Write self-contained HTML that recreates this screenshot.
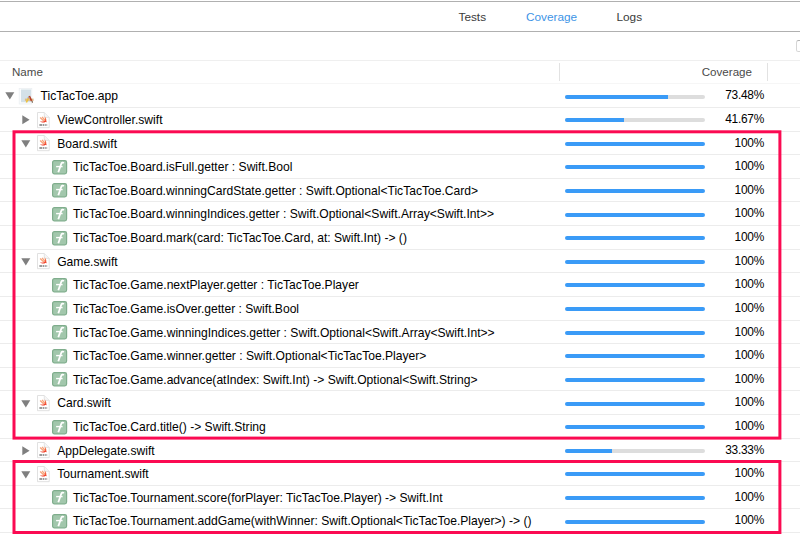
<!DOCTYPE html>
<html><head><meta charset="utf-8"><style>
html,body{margin:0;padding:0;background:#fff;}
body{width:800px;height:555px;position:relative;overflow:hidden;font-family:"Liberation Sans",sans-serif;}
.ln{position:absolute;left:0;width:800px;height:1px;}
.sep{position:absolute;left:0;width:800px;height:1px;background:#ececec;}
.ic{position:absolute;display:block;}
.nm{position:absolute;font-size:12.1px;line-height:20px;color:#000;white-space:pre;}
.pct{position:absolute;right:36px;letter-spacing:-0.25px;font-size:11.9px;line-height:20px;color:#000;white-space:pre;}
.bar{position:absolute;left:565px;width:140.4px;height:4px;border-radius:2px;background:#dddddd;overflow:hidden;}
.fill{height:100%;background:#3a9bf7;}
.tab{position:absolute;top:7px;font-size:11.8px;line-height:20px;color:#3a3a3a;white-space:pre;}
.hd{position:absolute;top:62px;font-size:11.6px;line-height:20px;color:#4a4a4a;white-space:pre;}
.vs{position:absolute;width:1px;background:#e2e2e2;top:63px;height:18px;}
.box{position:absolute;left:12.5px;width:762.4px;border:3px solid #fb0a52;}
</style></head><body>
<div class="ln" style="top:1px;background:#b0b0b0"></div>
<div class="tab" style="left:458.5px">Tests</div>
<div class="tab" style="left:526px;color:#3d94e6">Coverage</div>
<div class="tab" style="left:616.5px">Logs</div>
<div class="ln" style="top:31px;background:#b0b0b0"></div>
<div style="position:absolute;left:796px;top:40px;width:10px;height:10px;border:1px solid #d6d6d6;border-top-color:#b5b5b5;border-radius:2.5px;"></div>
<div class="ln" style="top:60px;background:#efefef"></div>
<div class="hd" style="left:12px">Name</div>
<div class="hd" style="right:48px">Coverage</div>
<div class="vs" style="left:559px"></div>
<div class="vs" style="left:767px"></div>
<div class="sep" style="top:83.39px;background:#f6f6f6"></div>
<div class="sep" style="top:107.00px"></div>
<div class="sep" style="top:130.61px"></div>
<div class="sep" style="top:154.22px"></div>
<div class="sep" style="top:177.83px"></div>
<div class="sep" style="top:201.44px"></div>
<div class="sep" style="top:225.06px"></div>
<div class="sep" style="top:248.67px"></div>
<div class="sep" style="top:272.28px"></div>
<div class="sep" style="top:295.89px"></div>
<div class="sep" style="top:319.50px"></div>
<div class="sep" style="top:343.11px"></div>
<div class="sep" style="top:366.72px"></div>
<div class="sep" style="top:390.33px"></div>
<div class="sep" style="top:413.94px"></div>
<div class="sep" style="top:437.56px"></div>
<div class="sep" style="top:461.17px"></div>
<div class="sep" style="top:484.78px"></div>
<div class="sep" style="top:508.39px"></div>
<div class="sep" style="top:532.00px"></div>
<svg class="ic" style="left:5px;top:92.39px" width="10" height="8" viewBox="0 0 10 8"><path d="M0.3 0.3H9.3L4.8 7.6Z" fill="#7f7f7f"/></svg>
<svg class="ic" style="left:18px;top:87.89px" width="17" height="17" viewBox="0 0 17 17">
<rect x="1.2" y="0.5" width="12.6" height="15.5" fill="#fbfcfd" stroke="#eceff2" stroke-width="0.8"/>
<rect x="3" y="1.5" width="10" height="12.7" fill="#d4e1e8"/>
<rect x="6.9" y="10.6" width="8.7" height="2.3" fill="#dcbb8c"/>
<path d="M11.3 8 L13.6 12.9" stroke="#b5402a" stroke-width="1.7"/>
<path d="M10.9 8.8 L8.4 14.5" stroke="#eec235" stroke-width="1.5"/>
<path d="M10.9 8.8 L10.2 10.3" stroke="#a894c8" stroke-width="1.2"/>
<path d="M13.8 13.2 L14.6 14.6" stroke="#5a3a20" stroke-width="1.1"/>
</svg>
<div class="nm" style="left:40.5px;top:86.39px">TicTacToe.app</div>
<div class="bar" style="top:94.59px"><div class="fill" style="width:103.17px"></div></div>
<div class="pct" style="top:85.39px">73.48%</div>
<svg class="ic" style="left:22px;top:115.20100000000001px" width="8" height="10" viewBox="0 0 8 10"><path d="M0.3 0.2V9.2L7.6 4.7Z" fill="#7f7f7f"/></svg>
<svg class="ic" style="left:36.7px;top:111.601px" width="13" height="17" viewBox="0 0 13 17">
<defs><linearGradient id="sg" x1="0" y1="0" x2="0" y2="1"><stop offset="0" stop-color="#f78c55"/><stop offset="1" stop-color="#f03a28"/></linearGradient></defs>
<path d="M0.5 0.5H7.3L12.2 5.4V15.7H0.5Z" fill="#fff" stroke="#dedede" stroke-width="0.9"/>
<path d="M7.3 0.5V5.4H12.2" fill="#f6f6f6" stroke="#dedede" stroke-width="0.8"/>
<path d="M3.1 5.6L6.8 8.9M5.1 4.9L7.6 7.9" stroke="#f7a47a" stroke-width="1.3"/>
<path d="M7.6 4.2C9 5.6 9.6 7.6 9.3 9.1C9.6 9.5 9.7 9.9 9.6 10.4C9.2 10 8.7 9.9 8.3 10.1C7 10.9 4.8 10.9 2.9 9.2C4.6 9.9 6.4 9.7 7.4 8.7C8 7.3 8.1 5.8 7.6 4.2Z" fill="url(#sg)"/>
<path d="M2.4 12.9H10.2" stroke="#7a7a7a" stroke-width="1.5" stroke-dasharray="3 0.6 1.4 0.6 0.8 0.6 1 0"/>
</svg>
<div class="nm" style="left:57.2px;top:110.00px">ViewController.swift</div>
<div class="bar" style="top:118.20px"><div class="fill" style="width:58.50px"></div></div>
<div class="pct" style="top:109.00px">41.67%</div>
<svg class="ic" style="left:21.4px;top:140.012px" width="10" height="8" viewBox="0 0 10 8"><path d="M0.3 0.3H9.3L4.8 7.6Z" fill="#7f7f7f"/></svg>
<svg class="ic" style="left:36.7px;top:135.212px" width="13" height="17" viewBox="0 0 13 17">
<defs><linearGradient id="sg" x1="0" y1="0" x2="0" y2="1"><stop offset="0" stop-color="#f78c55"/><stop offset="1" stop-color="#f03a28"/></linearGradient></defs>
<path d="M0.5 0.5H7.3L12.2 5.4V15.7H0.5Z" fill="#fff" stroke="#dedede" stroke-width="0.9"/>
<path d="M7.3 0.5V5.4H12.2" fill="#f6f6f6" stroke="#dedede" stroke-width="0.8"/>
<path d="M3.1 5.6L6.8 8.9M5.1 4.9L7.6 7.9" stroke="#f7a47a" stroke-width="1.3"/>
<path d="M7.6 4.2C9 5.6 9.6 7.6 9.3 9.1C9.6 9.5 9.7 9.9 9.6 10.4C9.2 10 8.7 9.9 8.3 10.1C7 10.9 4.8 10.9 2.9 9.2C4.6 9.9 6.4 9.7 7.4 8.7C8 7.3 8.1 5.8 7.6 4.2Z" fill="url(#sg)"/>
<path d="M2.4 12.9H10.2" stroke="#7a7a7a" stroke-width="1.5" stroke-dasharray="3 0.6 1.4 0.6 0.8 0.6 1 0"/>
</svg>
<div class="nm" style="left:57.2px;top:133.61px">Board.swift</div>
<div class="bar" style="top:141.81px"><div class="fill" style="width:140.40px"></div></div>
<div class="pct" style="top:132.61px">100%</div>
<svg class="ic" style="left:51.8px;top:159.823px" width="16" height="15" viewBox="0 0 16 15">
<rect x="0.6" y="0.6" width="14" height="13.2" rx="1.8" fill="#a2c7ac" stroke="#7fad8c" stroke-width="1.2"/>
<path d="M11.9 2.9C11 2.3 9.8 2.5 9.3 3.8L6.3 12.3" fill="none" stroke="#fff" stroke-width="1.8"/>
<path d="M4.1 6.6H10.6" stroke="#fff" stroke-width="1.4"/>
</svg>
<div class="nm" style="left:73px;top:157.22px">TicTacToe.Board.isFull.getter : Swift.Bool</div>
<div class="bar" style="top:165.42px"><div class="fill" style="width:140.40px"></div></div>
<div class="pct" style="top:156.22px">100%</div>
<svg class="ic" style="left:51.8px;top:183.434px" width="16" height="15" viewBox="0 0 16 15">
<rect x="0.6" y="0.6" width="14" height="13.2" rx="1.8" fill="#a2c7ac" stroke="#7fad8c" stroke-width="1.2"/>
<path d="M11.9 2.9C11 2.3 9.8 2.5 9.3 3.8L6.3 12.3" fill="none" stroke="#fff" stroke-width="1.8"/>
<path d="M4.1 6.6H10.6" stroke="#fff" stroke-width="1.4"/>
</svg>
<div class="nm" style="left:73px;top:180.83px">TicTacToe.Board.winningCardState.getter : Swift.Optional&lt;TicTacToe.Card&gt;</div>
<div class="bar" style="top:189.03px"><div class="fill" style="width:140.40px"></div></div>
<div class="pct" style="top:179.83px">100%</div>
<svg class="ic" style="left:51.8px;top:207.045px" width="16" height="15" viewBox="0 0 16 15">
<rect x="0.6" y="0.6" width="14" height="13.2" rx="1.8" fill="#a2c7ac" stroke="#7fad8c" stroke-width="1.2"/>
<path d="M11.9 2.9C11 2.3 9.8 2.5 9.3 3.8L6.3 12.3" fill="none" stroke="#fff" stroke-width="1.8"/>
<path d="M4.1 6.6H10.6" stroke="#fff" stroke-width="1.4"/>
</svg>
<div class="nm" style="left:73px;top:204.44px">TicTacToe.Board.winningIndices.getter : Swift.Optional&lt;Swift.Array&lt;Swift.Int&gt;&gt;</div>
<div class="bar" style="top:212.64px"><div class="fill" style="width:140.40px"></div></div>
<div class="pct" style="top:203.44px">100%</div>
<svg class="ic" style="left:51.8px;top:230.65599999999998px" width="16" height="15" viewBox="0 0 16 15">
<rect x="0.6" y="0.6" width="14" height="13.2" rx="1.8" fill="#a2c7ac" stroke="#7fad8c" stroke-width="1.2"/>
<path d="M11.9 2.9C11 2.3 9.8 2.5 9.3 3.8L6.3 12.3" fill="none" stroke="#fff" stroke-width="1.8"/>
<path d="M4.1 6.6H10.6" stroke="#fff" stroke-width="1.4"/>
</svg>
<div class="nm" style="left:73px;top:228.06px">TicTacToe.Board.mark(card: TicTacToe.Card, at: Swift.Int) -&gt; ()</div>
<div class="bar" style="top:236.26px"><div class="fill" style="width:140.40px"></div></div>
<div class="pct" style="top:227.06px">100%</div>
<svg class="ic" style="left:21.4px;top:258.067px" width="10" height="8" viewBox="0 0 10 8"><path d="M0.3 0.3H9.3L4.8 7.6Z" fill="#7f7f7f"/></svg>
<svg class="ic" style="left:36.7px;top:253.26700000000002px" width="13" height="17" viewBox="0 0 13 17">
<defs><linearGradient id="sg" x1="0" y1="0" x2="0" y2="1"><stop offset="0" stop-color="#f78c55"/><stop offset="1" stop-color="#f03a28"/></linearGradient></defs>
<path d="M0.5 0.5H7.3L12.2 5.4V15.7H0.5Z" fill="#fff" stroke="#dedede" stroke-width="0.9"/>
<path d="M7.3 0.5V5.4H12.2" fill="#f6f6f6" stroke="#dedede" stroke-width="0.8"/>
<path d="M3.1 5.6L6.8 8.9M5.1 4.9L7.6 7.9" stroke="#f7a47a" stroke-width="1.3"/>
<path d="M7.6 4.2C9 5.6 9.6 7.6 9.3 9.1C9.6 9.5 9.7 9.9 9.6 10.4C9.2 10 8.7 9.9 8.3 10.1C7 10.9 4.8 10.9 2.9 9.2C4.6 9.9 6.4 9.7 7.4 8.7C8 7.3 8.1 5.8 7.6 4.2Z" fill="url(#sg)"/>
<path d="M2.4 12.9H10.2" stroke="#7a7a7a" stroke-width="1.5" stroke-dasharray="3 0.6 1.4 0.6 0.8 0.6 1 0"/>
</svg>
<div class="nm" style="left:57.2px;top:251.67px">Game.swift</div>
<div class="bar" style="top:259.87px"><div class="fill" style="width:140.40px"></div></div>
<div class="pct" style="top:250.67px">100%</div>
<svg class="ic" style="left:51.8px;top:277.87800000000004px" width="16" height="15" viewBox="0 0 16 15">
<rect x="0.6" y="0.6" width="14" height="13.2" rx="1.8" fill="#a2c7ac" stroke="#7fad8c" stroke-width="1.2"/>
<path d="M11.9 2.9C11 2.3 9.8 2.5 9.3 3.8L6.3 12.3" fill="none" stroke="#fff" stroke-width="1.8"/>
<path d="M4.1 6.6H10.6" stroke="#fff" stroke-width="1.4"/>
</svg>
<div class="nm" style="left:73px;top:275.28px">TicTacToe.Game.nextPlayer.getter : TicTacToe.Player</div>
<div class="bar" style="top:283.48px"><div class="fill" style="width:140.40px"></div></div>
<div class="pct" style="top:274.28px">100%</div>
<svg class="ic" style="left:51.8px;top:301.48900000000003px" width="16" height="15" viewBox="0 0 16 15">
<rect x="0.6" y="0.6" width="14" height="13.2" rx="1.8" fill="#a2c7ac" stroke="#7fad8c" stroke-width="1.2"/>
<path d="M11.9 2.9C11 2.3 9.8 2.5 9.3 3.8L6.3 12.3" fill="none" stroke="#fff" stroke-width="1.8"/>
<path d="M4.1 6.6H10.6" stroke="#fff" stroke-width="1.4"/>
</svg>
<div class="nm" style="left:73px;top:298.89px">TicTacToe.Game.isOver.getter : Swift.Bool</div>
<div class="bar" style="top:307.09px"><div class="fill" style="width:140.40px"></div></div>
<div class="pct" style="top:297.89px">100%</div>
<svg class="ic" style="left:51.8px;top:325.1px" width="16" height="15" viewBox="0 0 16 15">
<rect x="0.6" y="0.6" width="14" height="13.2" rx="1.8" fill="#a2c7ac" stroke="#7fad8c" stroke-width="1.2"/>
<path d="M11.9 2.9C11 2.3 9.8 2.5 9.3 3.8L6.3 12.3" fill="none" stroke="#fff" stroke-width="1.8"/>
<path d="M4.1 6.6H10.6" stroke="#fff" stroke-width="1.4"/>
</svg>
<div class="nm" style="left:73px;top:322.50px">TicTacToe.Game.winningIndices.getter : Swift.Optional&lt;Swift.Array&lt;Swift.Int&gt;&gt;</div>
<div class="bar" style="top:330.70px"><div class="fill" style="width:140.40px"></div></div>
<div class="pct" style="top:321.50px">100%</div>
<svg class="ic" style="left:51.8px;top:348.711px" width="16" height="15" viewBox="0 0 16 15">
<rect x="0.6" y="0.6" width="14" height="13.2" rx="1.8" fill="#a2c7ac" stroke="#7fad8c" stroke-width="1.2"/>
<path d="M11.9 2.9C11 2.3 9.8 2.5 9.3 3.8L6.3 12.3" fill="none" stroke="#fff" stroke-width="1.8"/>
<path d="M4.1 6.6H10.6" stroke="#fff" stroke-width="1.4"/>
</svg>
<div class="nm" style="left:73px;top:346.11px">TicTacToe.Game.winner.getter : Swift.Optional&lt;TicTacToe.Player&gt;</div>
<div class="bar" style="top:354.31px"><div class="fill" style="width:140.40px"></div></div>
<div class="pct" style="top:345.11px">100%</div>
<svg class="ic" style="left:51.8px;top:372.322px" width="16" height="15" viewBox="0 0 16 15">
<rect x="0.6" y="0.6" width="14" height="13.2" rx="1.8" fill="#a2c7ac" stroke="#7fad8c" stroke-width="1.2"/>
<path d="M11.9 2.9C11 2.3 9.8 2.5 9.3 3.8L6.3 12.3" fill="none" stroke="#fff" stroke-width="1.8"/>
<path d="M4.1 6.6H10.6" stroke="#fff" stroke-width="1.4"/>
</svg>
<div class="nm" style="left:73px;top:369.72px">TicTacToe.Game.advance(atIndex: Swift.Int) -&gt; Swift.Optional&lt;Swift.String&gt;</div>
<div class="bar" style="top:377.92px"><div class="fill" style="width:140.40px"></div></div>
<div class="pct" style="top:368.72px">100%</div>
<svg class="ic" style="left:21.4px;top:399.73299999999995px" width="10" height="8" viewBox="0 0 10 8"><path d="M0.3 0.3H9.3L4.8 7.6Z" fill="#7f7f7f"/></svg>
<svg class="ic" style="left:36.7px;top:394.933px" width="13" height="17" viewBox="0 0 13 17">
<defs><linearGradient id="sg" x1="0" y1="0" x2="0" y2="1"><stop offset="0" stop-color="#f78c55"/><stop offset="1" stop-color="#f03a28"/></linearGradient></defs>
<path d="M0.5 0.5H7.3L12.2 5.4V15.7H0.5Z" fill="#fff" stroke="#dedede" stroke-width="0.9"/>
<path d="M7.3 0.5V5.4H12.2" fill="#f6f6f6" stroke="#dedede" stroke-width="0.8"/>
<path d="M3.1 5.6L6.8 8.9M5.1 4.9L7.6 7.9" stroke="#f7a47a" stroke-width="1.3"/>
<path d="M7.6 4.2C9 5.6 9.6 7.6 9.3 9.1C9.6 9.5 9.7 9.9 9.6 10.4C9.2 10 8.7 9.9 8.3 10.1C7 10.9 4.8 10.9 2.9 9.2C4.6 9.9 6.4 9.7 7.4 8.7C8 7.3 8.1 5.8 7.6 4.2Z" fill="url(#sg)"/>
<path d="M2.4 12.9H10.2" stroke="#7a7a7a" stroke-width="1.5" stroke-dasharray="3 0.6 1.4 0.6 0.8 0.6 1 0"/>
</svg>
<div class="nm" style="left:57.2px;top:393.33px">Card.swift</div>
<div class="bar" style="top:401.53px"><div class="fill" style="width:140.40px"></div></div>
<div class="pct" style="top:392.33px">100%</div>
<svg class="ic" style="left:51.8px;top:419.54400000000004px" width="16" height="15" viewBox="0 0 16 15">
<rect x="0.6" y="0.6" width="14" height="13.2" rx="1.8" fill="#a2c7ac" stroke="#7fad8c" stroke-width="1.2"/>
<path d="M11.9 2.9C11 2.3 9.8 2.5 9.3 3.8L6.3 12.3" fill="none" stroke="#fff" stroke-width="1.8"/>
<path d="M4.1 6.6H10.6" stroke="#fff" stroke-width="1.4"/>
</svg>
<div class="nm" style="left:73px;top:416.94px">TicTacToe.Card.title() -&gt; Swift.String</div>
<div class="bar" style="top:425.14px"><div class="fill" style="width:140.40px"></div></div>
<div class="pct" style="top:415.94px">100%</div>
<svg class="ic" style="left:22px;top:445.755px" width="8" height="10" viewBox="0 0 8 10"><path d="M0.3 0.2V9.2L7.6 4.7Z" fill="#7f7f7f"/></svg>
<svg class="ic" style="left:36.7px;top:442.15500000000003px" width="13" height="17" viewBox="0 0 13 17">
<defs><linearGradient id="sg" x1="0" y1="0" x2="0" y2="1"><stop offset="0" stop-color="#f78c55"/><stop offset="1" stop-color="#f03a28"/></linearGradient></defs>
<path d="M0.5 0.5H7.3L12.2 5.4V15.7H0.5Z" fill="#fff" stroke="#dedede" stroke-width="0.9"/>
<path d="M7.3 0.5V5.4H12.2" fill="#f6f6f6" stroke="#dedede" stroke-width="0.8"/>
<path d="M3.1 5.6L6.8 8.9M5.1 4.9L7.6 7.9" stroke="#f7a47a" stroke-width="1.3"/>
<path d="M7.6 4.2C9 5.6 9.6 7.6 9.3 9.1C9.6 9.5 9.7 9.9 9.6 10.4C9.2 10 8.7 9.9 8.3 10.1C7 10.9 4.8 10.9 2.9 9.2C4.6 9.9 6.4 9.7 7.4 8.7C8 7.3 8.1 5.8 7.6 4.2Z" fill="url(#sg)"/>
<path d="M2.4 12.9H10.2" stroke="#7a7a7a" stroke-width="1.5" stroke-dasharray="3 0.6 1.4 0.6 0.8 0.6 1 0"/>
</svg>
<div class="nm" style="left:57.2px;top:440.56px">AppDelegate.swift</div>
<div class="bar" style="top:448.75px"><div class="fill" style="width:46.80px"></div></div>
<div class="pct" style="top:439.56px">33.33%</div>
<svg class="ic" style="left:21.4px;top:470.566px" width="10" height="8" viewBox="0 0 10 8"><path d="M0.3 0.3H9.3L4.8 7.6Z" fill="#7f7f7f"/></svg>
<svg class="ic" style="left:36.7px;top:465.766px" width="13" height="17" viewBox="0 0 13 17">
<defs><linearGradient id="sg" x1="0" y1="0" x2="0" y2="1"><stop offset="0" stop-color="#f78c55"/><stop offset="1" stop-color="#f03a28"/></linearGradient></defs>
<path d="M0.5 0.5H7.3L12.2 5.4V15.7H0.5Z" fill="#fff" stroke="#dedede" stroke-width="0.9"/>
<path d="M7.3 0.5V5.4H12.2" fill="#f6f6f6" stroke="#dedede" stroke-width="0.8"/>
<path d="M3.1 5.6L6.8 8.9M5.1 4.9L7.6 7.9" stroke="#f7a47a" stroke-width="1.3"/>
<path d="M7.6 4.2C9 5.6 9.6 7.6 9.3 9.1C9.6 9.5 9.7 9.9 9.6 10.4C9.2 10 8.7 9.9 8.3 10.1C7 10.9 4.8 10.9 2.9 9.2C4.6 9.9 6.4 9.7 7.4 8.7C8 7.3 8.1 5.8 7.6 4.2Z" fill="url(#sg)"/>
<path d="M2.4 12.9H10.2" stroke="#7a7a7a" stroke-width="1.5" stroke-dasharray="3 0.6 1.4 0.6 0.8 0.6 1 0"/>
</svg>
<div class="nm" style="left:57.2px;top:464.17px">Tournament.swift</div>
<div class="bar" style="top:472.37px"><div class="fill" style="width:140.40px"></div></div>
<div class="pct" style="top:463.17px">100%</div>
<svg class="ic" style="left:51.8px;top:490.377px" width="16" height="15" viewBox="0 0 16 15">
<rect x="0.6" y="0.6" width="14" height="13.2" rx="1.8" fill="#a2c7ac" stroke="#7fad8c" stroke-width="1.2"/>
<path d="M11.9 2.9C11 2.3 9.8 2.5 9.3 3.8L6.3 12.3" fill="none" stroke="#fff" stroke-width="1.8"/>
<path d="M4.1 6.6H10.6" stroke="#fff" stroke-width="1.4"/>
</svg>
<div class="nm" style="left:73px;top:487.78px">TicTacToe.Tournament.score(forPlayer: TicTacToe.Player) -&gt; Swift.Int</div>
<div class="bar" style="top:495.98px"><div class="fill" style="width:140.40px"></div></div>
<div class="pct" style="top:486.78px">100%</div>
<svg class="ic" style="left:51.8px;top:513.9879999999999px" width="16" height="15" viewBox="0 0 16 15">
<rect x="0.6" y="0.6" width="14" height="13.2" rx="1.8" fill="#a2c7ac" stroke="#7fad8c" stroke-width="1.2"/>
<path d="M11.9 2.9C11 2.3 9.8 2.5 9.3 3.8L6.3 12.3" fill="none" stroke="#fff" stroke-width="1.8"/>
<path d="M4.1 6.6H10.6" stroke="#fff" stroke-width="1.4"/>
</svg>
<div class="nm" style="left:73px;top:511.39px">TicTacToe.Tournament.addGame(withWinner: Swift.Optional&lt;TicTacToe.Player&gt;) -&gt; ()</div>
<div class="bar" style="top:519.59px"><div class="fill" style="width:140.40px"></div></div>
<div class="pct" style="top:510.39px">100%</div>
<svg style="position:absolute;left:0;top:0" width="800" height="555" viewBox="0 0 800 555"><g fill="none" stroke="#fb0a52" stroke-width="3"><rect x="14" y="131.8" width="765.9" height="306.3"/><rect x="14" y="461.5" width="765.9" height="71"/></g></svg>
</body></html>
